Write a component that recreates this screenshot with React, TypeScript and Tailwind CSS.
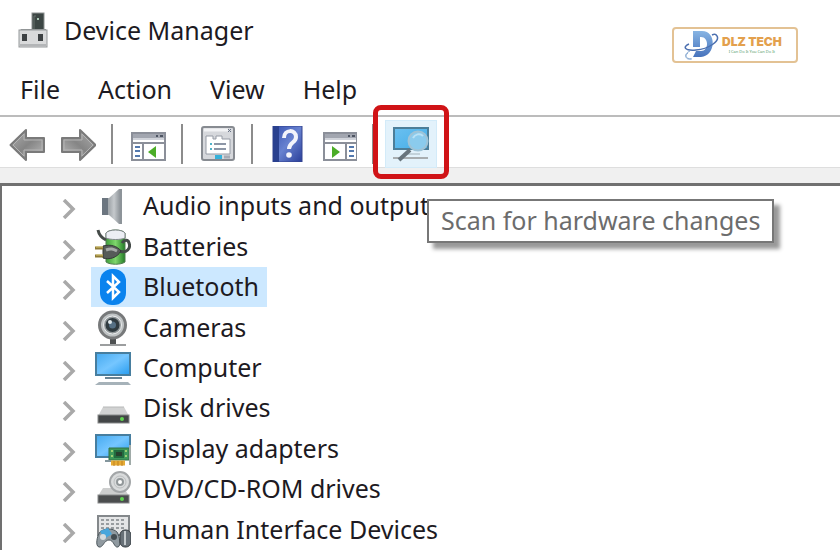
import type { ReactNode } from "react";

type IconProps = {
  children: ReactNode;
};

function Icon({ children }: IconProps) {
  return (
    <svg viewBox="0 0 36 36" className="block size-9 shrink-0" aria-hidden="true">
      {children}
    </svg>
  );
}

function ManagerIcon() {
  return (
    <Icon>
      <rect x="18" y="1" width="12" height="17" fill="#3c4644" stroke="#8b908f" />
      <path d="M20 17V4h2" stroke="#66706d" fill="none" />
      <rect x="23" y="6" width="2" height="2" fill="#a9c7b4" />
      <path d="M7 17h25v3H5z" fill="#8f9293" />
      <rect x="5" y="18" width="28" height="17" fill="#d9dadb" stroke="#96999b" />
      <path d="M6 33h26" stroke="#b3b5b7" strokeWidth="2" />
      <rect x="8" y="22" width="5" height="7" fill="#3d4143" />
      <rect x="24" y="22" width="5" height="7" fill="#3d4143" />
    </Icon>
  );
}

function ArrowIcon({ flipped }: { flipped?: boolean }) {
  const id = flipped ? "arrow-forward" : "arrow-back";
  return (
    <Icon>
      <defs>
        <linearGradient id={id} x1="0" y1="0" x2="1" y2="1">
          <stop offset="0" stopColor="#b0b0b0" />
          <stop offset="0.5" stopColor="#858585" />
          <stop offset="1" stopColor="#bdbdbd" />
        </linearGradient>
      </defs>
      <g transform={flipped ? "translate(37 0) scale(-1 1)" : undefined}>
        <path
          d="M1.500 19 17 4v8h18v14H17v8z"
          fill={`url(#${id})`}
          stroke="#7a7a7a"
          strokeWidth="2"
          strokeLinejoin="round"
        />
        <path d="M4 19 15 8v6h18v10H15v6z" fill="none" stroke="#b4b4b4" />
      </g>
    </Icon>
  );
}

function ConsoleTreeIcon() {
  return (
    <Icon>
      <rect x="2" y="7" width="33" height="27" fill="#fff" stroke="#8b8f99" strokeWidth="2" />
      <path d="M3 8h31v4H3z" fill="#a2a6b0" />
      <path d="M26 10h2M30 10h3" stroke="#4e5563" strokeWidth="2" />
      <path d="M3 13h31" stroke="#d0d3da" strokeWidth="2" />
      <path d="M3 17h31M13 17v16" stroke="#8b8f99" strokeWidth="2" />
      <path d="M5 21h5M5 25h5M5 30h5" stroke="#5479ae" strokeWidth="2" />
      <path d="M18 26l8-6v12z" fill="#4bad27" />
    </Icon>
  );
}

function ActionPaneIcon() {
  return (
    <Icon>
      <rect x="3" y="7" width="33" height="27" fill="#fff" stroke="#8b8f99" strokeWidth="2" />
      <path d="M4 8h31v4H4z" fill="#a2a6b0" />
      <path d="M27 10h2M31 10h3" stroke="#4e5563" strokeWidth="2" />
      <path d="M4 13h31" stroke="#d0d3da" strokeWidth="2" />
      <path d="M4 17h31M25 17v16" stroke="#8b8f99" strokeWidth="2" />
      <path d="M28 21h5M28 25h5M28 30h5" stroke="#5479ae" strokeWidth="2" />
      <path d="M19 26l-8-6v12z" fill="#4bad27" />
    </Icon>
  );
}

function PropertiesIcon() {
  return (
    <Icon>
      <rect x="2" y="1" width="32" height="33" rx="2" fill="#d6d8dc" stroke="#878b91" strokeWidth="2" />
      <path d="M4 4h24" stroke="#f2f3f5" strokeWidth="3" />
      <path d="M28 3l3 3m0-3-3 3" stroke="#687386" />
      <path d="M6 10h7v3h3v-3h6v3h8v15H6z" fill="#fff" stroke="#969ba5" />
      <path d="M10 18h2M10 23h2" stroke="#51b2c9" strokeWidth="2" />
      <path d="M14 18h12M14 23h12" stroke="#8d96a6" strokeWidth="2" />
      <path d="M15 31h7" stroke="#36b1d9" strokeWidth="4" />
      <path d="M24 31h6" stroke="#a6abb4" strokeWidth="3" />
    </Icon>
  );
}

function HelpIcon() {
  return (
    <Icon>
      <defs>
        <linearGradient id="help-book" x1="0" y1="0" x2="1" y2="1">
          <stop offset="0" stopColor="#354fae" />
          <stop offset="0.5" stopColor="#6882d0" />
          <stop offset="1" stopColor="#293e99" />
        </linearGradient>
      </defs>
      <rect x="3" y="0" width="29" height="36" fill="url(#help-book)" stroke="#34458f" />
      <rect x="3" y="0" width="6" height="36" fill="#29408f" />
      <path
        d="M14 12c0-9 12-9 12-1 0 6-7 5-7 12"
        fill="none"
        stroke="#f3f4fb"
        strokeWidth="4"
      />
      <circle cx="19" cy="29" r="2.800" fill="#f3f4fb" />
    </Icon>
  );
}

function ScanIcon() {
  return (
    <Icon>
      <defs>
        <linearGradient id="scan-screen" x1="0" y1="0" x2="1" y2="1">
          <stop offset="0" stopColor="#6bc0f0" />
          <stop offset="1" stopColor="#45aee8" />
        </linearGradient>
      </defs>
      <rect x="1" y="2" width="34" height="21" fill="url(#scan-screen)" stroke="#4c7e99" strokeWidth="2" />
      <path d="M0 32h35" stroke="#a8adb0" strokeWidth="2" />
      <path d="M12 28h15" stroke="#c3d2da" strokeWidth="2" />
      <path d="M17 24 6 34" stroke="#68747c" strokeWidth="4" />
      <circle cx="25" cy="15" r="9.500" fill="#8bcbed" stroke="#9fc3d6" strokeWidth="2" />
      <path d="M20 12c2-4 7-5 10-2" fill="none" stroke="#b9e2f7" strokeWidth="2" />
    </Icon>
  );
}

function AudioIcon() {
  return (
    <Icon>
      <defs>
        <linearGradient id="speaker">
          <stop offset="0" stopColor="#6f767c" />
          <stop offset="0.6" stopColor="#c5c9cc" />
          <stop offset="1" stopColor="#7c8389" />
        </linearGradient>
      </defs>
      <path d="M7 10h7L24 1h3v35h-3L14 27H7z" fill="url(#speaker)" />
      <path d="M7 10h6v17H7z" fill="#6c7680" />
      <path d="M14 10v17" stroke="#a9aeb2" />
      <path d="M26 1v35" stroke="#8d9499" strokeWidth="2" />
    </Icon>
  );
}

function BatteryIcon() {
  return (
    <Icon>
      <defs>
        <linearGradient id="battery">
          <stop offset="0" stopColor="#3f9e3a" />
          <stop offset="0.5" stopColor="#7fd66c" />
          <stop offset="1" stopColor="#237d27" />
        </linearGradient>
      </defs>
      <path d="M11 4c3-4 16-4 19 0v29c-4 3-15 3-19 0z" fill="url(#battery)" stroke="#517c51" />
      <path d="M11 4c3-4 16-4 19 0v5c-4 2-15 2-19 0z" fill="#eceef4" stroke="#82878c" />
      <path
        d="M3 1c1 5 4 8 8 10M24 22c8 3 12-3 10-8-1-4-5-3-7 0"
        fill="none"
        stroke="#454b49"
        strokeWidth="3"
      />
      <path d="M8 17c8-2 14 0 18 5-4 7-12 9-18 7z" fill="#565b59" stroke="#343837" />
      <path d="M11 21c5-2 7-1 11 1" fill="none" stroke="#a6aaa8" strokeWidth="3" />
      <path d="M0 19h8M0 27h8" stroke="#8e7b36" strokeWidth="3" />
      <path d="M1 18h7M1 26h7" stroke="#d8c671" />
    </Icon>
  );
}

function BluetoothIcon() {
  return (
    <Icon>
      <rect x="5" y="0" width="26" height="36" rx="12" fill="#0a83ee" />
      <path d="m12 12 12 11-6 6V7l6 6-12 11" fill="none" stroke="#fff" strokeWidth="2.500" />
    </Icon>
  );
}

function CameraIcon() {
  return (
    <Icon>
      <path d="M18 29v5" stroke="#4e5152" strokeWidth="6" />
      <path d="M5 35h26" stroke="#9c9e9f" strokeWidth="2" />
      <circle cx="17.500" cy="15" r="13" fill="#bfc3c4" stroke="#77797a" strokeWidth="3" />
      <circle cx="17.500" cy="15" r="9" fill="#919799" stroke="#eceeef" />
      <circle cx="17.500" cy="15" r="7" fill="#303b40" />
      <circle cx="17.500" cy="15" r="3.500" fill="#557084" />
      <circle cx="15" cy="12" r="2" fill="#e2eaed" />
    </Icon>
  );
}

function ComputerIcon() {
  return (
    <Icon>
      <defs>
        <linearGradient id="computer" x1="0" y1="0" x2="1" y2="1">
          <stop offset="0" stopColor="#45a9ef" />
          <stop offset="0.5" stopColor="#75c6ff" />
          <stop offset="1" stopColor="#269cf0" />
        </linearGradient>
      </defs>
      <rect x="1" y="3" width="34" height="22" fill="url(#computer)" stroke="#477e9f" strokeWidth="2" />
      <path d="M10 28h17" stroke="#698393" strokeWidth="2" />
      <path d="M4 32h29l3 3H0z" fill="#a6b2b9" />
    </Icon>
  );
}

function DiskIcon() {
  return (
    <Icon>
      <path d="m8 17-5 9h31l-5-9z" fill="#d1d2d2" />
      <path d="M8 17h21" stroke="#b7b8b8" />
      <rect x="3" y="25" width="31" height="8" fill="#434647" stroke="#87898a" />
      <circle cx="27" cy="29" r="2" fill="#61d451" />
    </Icon>
  );
}

function DisplayIcon() {
  return (
    <Icon>
      <rect x="1" y="4" width="34" height="22" fill="url(#computer)" stroke="#477e9f" strokeWidth="2" />
      <path d="M14 17h20v12H14z" fill="#3e995a" stroke="#327347" />
      <path d="M19 19h10v8H19z" fill="#226c40" />
      <path d="M21 21h6v4h-6z" fill="#27412e" />
      <path d="M16 20h2m-2 5h2m12-5h2m-2 5h2" stroke="#9bcf72" strokeWidth="2" />
      <path d="M16 32h14" stroke="#e6ab35" strokeWidth="5" />
      <path d="M19 30v5m4-5v5m4-5v5" stroke="#bf8122" />
      <path d="M35 14v20" stroke="#a0aba8" strokeWidth="2" />
      <path d="M10 30h6" stroke="#84969d" strokeWidth="2" />
    </Icon>
  );
}

function DvdIcon() {
  return (
    <Icon>
      <path d="m8 17-5 8h31l-5-8z" fill="#cdcece" />
      <circle cx="25" cy="11" r="10" fill="#d9dbdc" stroke="#a3a6a8" strokeWidth="2" />
      <circle cx="25" cy="11" r="6" fill="none" stroke="#bbbebf" />
      <circle cx="25" cy="11" r="3" fill="#fff" stroke="#92989a" strokeWidth="2" />
      <rect x="3" y="24" width="31" height="8" fill="#4b4d4e" stroke="#87898a" />
      <circle cx="27" cy="28" r="2" fill="#61d451" />
    </Icon>
  );
}

function HidIcon() {
  return (
    <Icon>
      <rect x="3" y="4" width="31" height="19" fill="#e4e5e6" stroke="#84888b" strokeWidth="2" />
      <path
        d="M6 8h25M6 12h25M6 16h25"
        stroke="#989c9f"
        strokeWidth="2"
        strokeDasharray="3 2"
      />
      <path
        d="M5 20c4-4 13-4 17 0 3 5 4 14 1 15-4 1-4-7-9-7s-6 8-10 7c-4-1-2-11 1-15z"
        fill="#909aa0"
        stroke="#4e585e"
      />
      <path d="m5 19 8-3 4 6-8 5z" fill="#49a6dc" />
      <circle cx="8" cy="25" r="3" fill="#d7dbdd" />
      <circle cx="19" cy="25" r="3" fill="#444d52" />
      <rect x="25" y="18" width="11" height="17" rx="5" fill="#687178" stroke="#373e43" />
      <path d="M30 19v14" stroke="#c4cacd" strokeWidth="2" />
    </Icon>
  );
}

type Device = {
  name: string;
  icon: ReactNode;
  selected?: boolean;
};

const devices: Device[] = [
  { name: "Audio inputs and outputs", icon: <AudioIcon /> },
  { name: "Batteries", icon: <BatteryIcon /> },
  { name: "Bluetooth", icon: <BluetoothIcon />, selected: true },
  { name: "Cameras", icon: <CameraIcon /> },
  { name: "Computer", icon: <ComputerIcon /> },
  { name: "Disk drives", icon: <DiskIcon /> },
  { name: "Display adapters", icon: <DisplayIcon /> },
  { name: "DVD/CD-ROM drives", icon: <DvdIcon /> },
  { name: "Human Interface Devices", icon: <HidIcon /> },
];

const menus = ["File", "Action", "View", "Help"];

function Separator() {
  return <span className="h-10 w-[2px] shrink-0 bg-[#8c8c8c]" />;
}

function Logo() {
  return (
    <div className="mt-[27px] flex h-9 w-[126px] items-center rounded-sm border-2 border-[#e3c294] bg-white pl-[10px]">
      <svg viewBox="0 0 38 32" className="h-8 w-[38px] shrink-0" aria-hidden="true">
        <defs>
          <linearGradient id="logo" x1="0" y1="0" x2="0" y2="1">
            <stop offset="0" stopColor="#87b4e3" />
            <stop offset="1" stopColor="#4773bd" />
          </linearGradient>
        </defs>
        <path
          d="M9 2h9c15 0 14 25-1 26H9l3-6h5c8 0 8-14 0-14h-1v10H9z"
          fill="url(#logo)"
        />
        <path
          d="M5 15C-2 18 1 22 12 21c13-1 24-9 21-14-1-2-3-2-5-1"
          fill="none"
          stroke="#4c70b0"
          strokeWidth="1.500"
        />
        <path d="M6 22c-7 3-5 8 2 8M4 24c-4 3-2 7 3 6" fill="none" stroke="#8fafd5" />
      </svg>
      <div className="flex flex-col items-center whitespace-nowrap">
        <span className="font-['Inter',sans-serif] text-[12px] leading-3 font-black text-[#e3a04d]">
          DLZ TECH
        </span>
        <span className="mt-[2px] text-[4px] leading-1 text-[#4f9a67]">I Can Do It You Can Do It</span>
      </div>
    </div>
  );
}

function Toolbar() {
  return (
    <div className="flex h-[52px] items-center gap-[15px] border-t-2 border-[#bcbcbc] pt-1 pl-[9px]">
      <button aria-label="Back">
        <ArrowIcon />
      </button>
      <button aria-label="Forward">
        <ArrowIcon flipped />
      </button>
      <Separator />
      <button aria-label="Show or hide console tree" className="ml-[2px]">
        <ConsoleTreeIcon />
      </button>
      <Separator />
      <button aria-label="Properties" className="ml-[2px]">
        <PropertiesIcon />
      </button>
      <Separator />
      <button aria-label="Help" className="ml-[2px]">
        <HelpIcon />
      </button>
      <button aria-label="Show or hide action pane">
        <ActionPaneIcon />
      </button>
      <Separator />
      <div className="relative -ml-1">
        <button
          aria-label="Scan for hardware changes"
          aria-describedby="scan-tip"
          className="flex h-12 w-[52px] items-center justify-center border border-[#d3ebf9] bg-[#e3f2fb]"
        >
          <ScanIcon />
        </button>
        <span className="pointer-events-none absolute -inset-x-3 -top-[15px] -bottom-[11px] rounded-lg border-[5px] border-[#d01316]" />
        <span
          id="scan-tip"
          role="tooltip"
          className="absolute top-[79px] left-[42px] z-10 border-2 border-[#777] bg-white px-3 pt-[3px] pb-[5px] whitespace-nowrap text-[#6c6c6c] shadow-[6px_6px_4px_#999]"
        >
          Scan for hardware changes
        </span>
      </div>
    </div>
  );
}

function DeviceTree() {
  return (
    <ul className="grid min-h-0 flex-1 auto-rows-fr border-t-[3px] border-l-2 border-[#707070] bg-white">
      {devices.map((device) => (
        <li key={device.name} className="flex items-center pl-[60px]">
          <button aria-label={`Expand ${device.name}`} className="mt-[6px] mr-[15px]">
            <svg viewBox="0 0 14 20" className="block h-5 w-[14px]" aria-hidden="true">
              <path d="m2 1 9 9-9 9" fill="none" stroke="#a9a9a9" strokeWidth="3.500" />
            </svg>
          </button>
          <a
            href="#"
            className={`flex h-10 items-center gap-3 pr-2 pl-1 whitespace-nowrap ${
              device.selected ? "bg-[#cce8ff]" : ""
            }`}
          >
            {device.icon}
            <span className="pb-[2px]">{device.name}</span>
          </a>
        </li>
      ))}
    </ul>
  );
}

export default function App() {
  return (
    <div className="flex h-screen flex-col overflow-hidden bg-white font-['Noto_Sans','Open_Sans',sans-serif] text-[25px] leading-8 text-[#1d1a22]">
      <header className="flex h-16 items-start justify-between pr-[42px] pl-[14px]">
        <div className="flex items-center gap-[14px] pt-3">
          <ManagerIcon />
          <h1>Device Manager</h1>
        </div>
        <Logo />
      </header>
      <nav className="flex h-[51px] items-center gap-[38px] pb-[2px] pl-5">
        {menus.map((menu) => (
          <button key={menu}>{menu}</button>
        ))}
      </nav>
      <Toolbar />
      <div className="h-4 border-t border-[#dedede] bg-[#f0f0f0]" />
      <DeviceTree />
    </div>
  );
}
